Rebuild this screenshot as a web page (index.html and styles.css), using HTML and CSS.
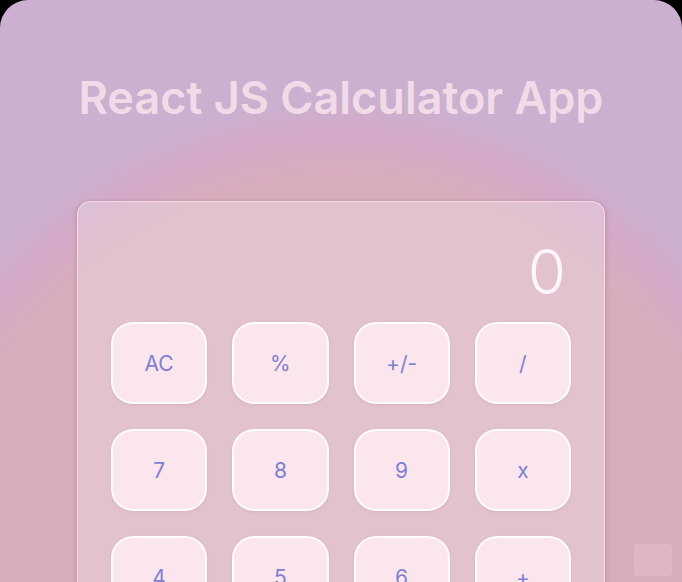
FILE: index.html
```html
<!DOCTYPE html>
<html lang="en">
<head>
<meta charset="utf-8">
<title>React JS Calculator App</title>
<link rel="stylesheet" href="styles.css">
</head>
<body>
<div class="app">
  <h1 class="title">React JS Calculator App</h1>
  <div class="calculator">
    <div class="display">0</div>
    <div class="keys">
      <button class="key">AC</button>
      <button class="key">%</button>
      <button class="key">+/-</button>
      <button class="key">/</button>
      <button class="key">7</button>
      <button class="key">8</button>
      <button class="key">9</button>
      <button class="key">x</button>
      <button class="key">4</button>
      <button class="key">5</button>
      <button class="key">6</button>
      <button class="key">+</button>
      <button class="key">1</button>
      <button class="key">2</button>
      <button class="key">3</button>
      <button class="key">-</button>
      <button class="key wide">0</button>
      <button class="key">.</button>
      <button class="key">=</button>
    </div>
  </div>
  <div class="corner-tab"></div>
</div>
</body>
</html>
```
FILE: styles.css
```css
html, body {
  margin: 0;
  padding: 0;
  background: #000;
  height: 100%;
  overflow: hidden;
}
.app {
  min-height: 100vh;
  border-radius: 28px 28px 0 0;
  background:
    radial-gradient(ellipse 480px 500px at 341px 600px, #d8adbb 0%, #d8adbb 84%, #d5a8c6 92%, rgba(203,176,207,0) 100%),
    #cbb0cf;
  display: flex;
  flex-direction: column;
  align-items: center;
  font-family: Inter, "Liberation Sans", Arial, sans-serif;
}
.title {
  margin: 69px 0 0;
  font-family: Inter, "Liberation Sans", Arial, sans-serif;
  font-size: 45px;
  font-weight: 600;
  line-height: 58px;
  color: rgba(250, 228, 238, 0.85);
  letter-spacing: 0;
}
.calculator {
  margin-top: 74px;
  width: 528px;
  box-sizing: border-box;
  padding: 33px 33px 40px;
  border-radius: 14px;
  background: rgba(255, 255, 255, 0.26);
  border: 1px solid rgba(255, 225, 235, 0.8);
  box-shadow: -2px 0 3px rgba(150, 110, 130, 0.25), 2px 0 3px rgba(150, 110, 130, 0.25);
}
.display {
  height: 62px;
  margin-bottom: 25px;
  text-align: right;
  padding-right: 5px;
  font-family: Inter, "Liberation Sans", sans-serif;
  font-weight: 300;
  font-size: 62px;
  line-height: 74px;
  color: #fff5fa;
}
.keys {
  display: grid;
  grid-template-columns: repeat(4, 1fr);
  grid-auto-rows: 82px;
  gap: 25px;
}
.key {
  border: 2px solid rgba(255, 255, 255, 0.85);
  border-radius: 22px;
  background: #fce6ee;
  color: #7f80cf;
  font-family: Inter, "Liberation Sans", Arial, sans-serif;
  font-size: 21px;
  font-weight: 400;
  padding: 0;
  box-shadow: 0 1px 3px rgba(160, 110, 130, 0.15);
}
.key.wide {
  grid-column: span 2;
}
.corner-tab {
  position: fixed;
  right: 10px;
  bottom: 6px;
  width: 38px;
  height: 32px;
  border-radius: 4px;
  background: rgba(240, 200, 215, 0.35);
}
```
